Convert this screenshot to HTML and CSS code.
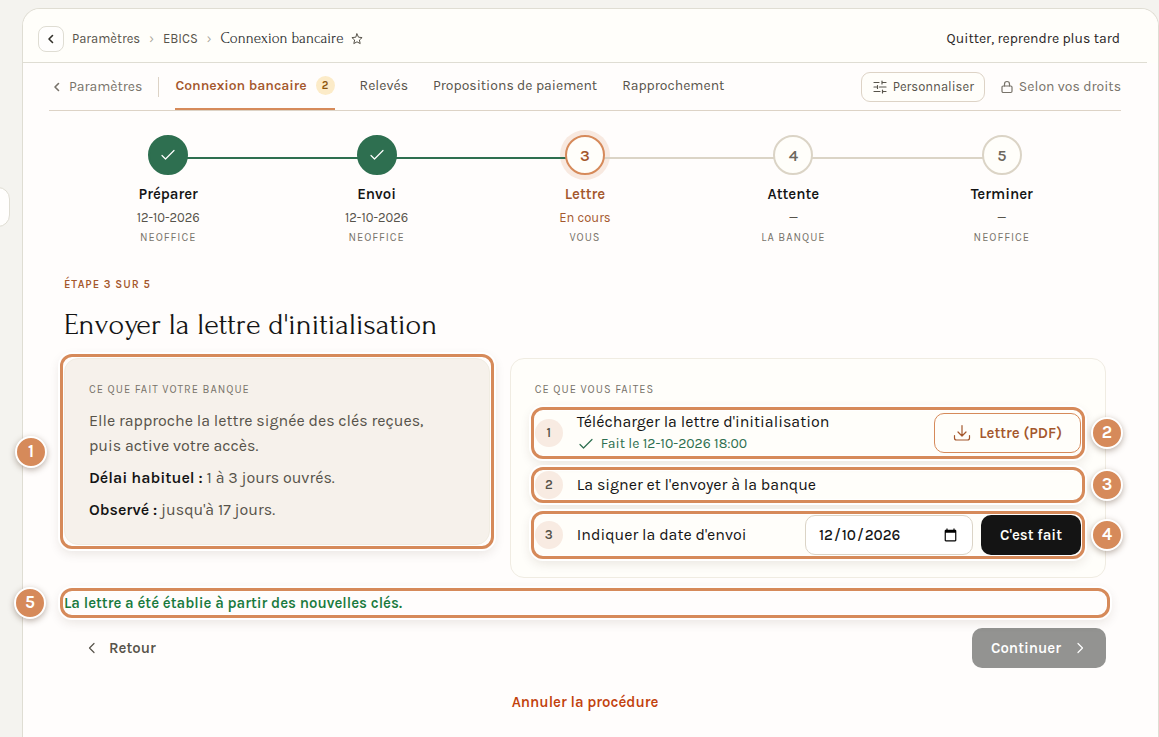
FILE: index.html
```html
<!DOCTYPE html>
<html lang="fr">
<head>
<meta charset="UTF-8">
<meta name="viewport" content="width=device-width, initial-scale=1.0">
<title>Connexion bancaire</title>
<link rel="stylesheet" href="styles.css">
</head>
<body>
<div class="side-handle"></div>
<div class="shell">
	<header class="topbar">
		<button class="back-btn" type="button" aria-label="Retour">
			<svg width="14" height="14" viewBox="0 0 14 14"><path d="M8.5 3.5L5 7l3.5 3.5"/></svg>
		</button>
		<nav class="crumbs">
			<a href="#">Paramètres</a>
			<span class="sep">›</span>
			<a href="#">EBICS</a>
			<span class="sep">›</span>
			<span class="current">Connexion bancaire</span>
		</nav>
		<button class="star" type="button" aria-label="Favori">
			<svg width="12" height="12" viewBox="0 0 12 12"><path d="M6 .9l1.500 3.300 3.600.4-2.700 2.400.8 3.600L6 8.800l-3.200 1.800.8-3.600L.9 4.600l3.600-.4z"/></svg>
		</button>
		<a class="quit" href="#">Quitter, reprendre plus tard</a>
	</header>

	<main class="content">
		<nav class="tabs">
			<a class="tab-back" href="#">
				<svg width="14" height="14" viewBox="0 0 14 14"><path d="M8.500 3.500L5 7l3.500 3.500"/></svg>
				Paramètres
			</a>
			<a class="tab active" href="#">Connexion bancaire <span class="count">2</span></a>
			<a class="tab" href="#">Relevés</a>
			<a class="tab" href="#">Propositions de paiement</a>
			<a class="tab" href="#">Rapprochement</a>
			<div class="tab-tools">
				<button class="customize" type="button">
					<svg width="14" height="14" viewBox="0 0 14 14"><path d="M1 2.500h5M9 2.500h4M9 1v3M1 7h2.500M6.500 7H13M4.500 5.500v3M1 11.500h6M10 11.500h3M9.500 10v3"/></svg>
					Personnaliser
				</button>
				<span class="rights">
					<svg width="12" height="14" viewBox="0 0 12 14"><rect x="1" y="6" width="10" height="6.500" rx="1.200"/><path d="M3.500 6V4a2.500 2.500 0 0 1 5 0v2"/></svg>
					Selon vos droits
				</span>
			</div>
		</nav>

		<div class="wizard">
			<ol class="steps">
				<li class="step done">
					<span class="dot"><svg width="16" height="16" viewBox="0 0 16 16"><path d="M2 8.500l3.500 3.500L14 3.500"/></svg></span>
					<span class="step-name">Préparer</span>
					<span class="step-date">12-10-2026</span>
					<span class="step-who">Neoffice</span>
				</li>
				<li class="step done">
					<span class="dot"><svg width="16" height="16" viewBox="0 0 16 16"><path d="M2 8.500l3.500 3.500L14 3.500"/></svg></span>
					<span class="step-name">Envoi</span>
					<span class="step-date">12-10-2026</span>
					<span class="step-who">Neoffice</span>
				</li>
				<li class="step now">
					<span class="dot">3</span>
					<span class="step-name">Lettre</span>
					<span class="step-date">En cours</span>
					<span class="step-who">Vous</span>
				</li>
				<li class="step">
					<span class="dot">4</span>
					<span class="step-name">Attente</span>
					<span class="step-date">—</span>
					<span class="step-who">La banque</span>
				</li>
				<li class="step">
					<span class="dot">5</span>
					<span class="step-name">Terminer</span>
					<span class="step-date">—</span>
					<span class="step-who">Neoffice</span>
				</li>
			</ol>

			<p class="eyebrow">Étape 3 sur 5</p>
			<h1>Envoyer la lettre d'initialisation</h1>

			<div class="panels">
				<section class="panel bank mark">
					<h2>Ce que fait votre banque</h2>
					<p>Elle rapproche la lettre signée des clés reçues, puis active votre accès.</p>
					<p><strong>Délai habituel :</strong> 1 à 3 jours ouvrés.</p>
					<p><strong>Observé :</strong> jusqu'à 17 jours.</p>
					<span class="pin pin-left">1</span>
				</section>

				<section class="panel you">
					<h2>Ce que vous faites</h2>
					<ol class="tasks">
						<li class="task tall mark">
							<span class="num">1</span>
							<div class="task-text">
								Télécharger la lettre d'initialisation
								<span class="task-done">
									<svg width="16" height="16" viewBox="0 0 16 16"><path d="M2 8.500l3.500 3.500L14 3.500"/></svg>
									Fait le 12-10-2026 18:00
								</span>
							</div>
							<button class="btn outline" type="button">
								<svg width="18" height="18" viewBox="0 0 18 18"><path d="M9 1.500v10M5 8l4 4 4-4M1.500 11.500v2.500a2 2 0 0 0 2 2h11a2 2 0 0 0 2-2v-2.500"/></svg>
								Lettre (PDF)
							</button>
							<span class="pin pin-right">2</span>
						</li>
						<li class="task mark">
							<span class="num">2</span>
							<div class="task-text">La signer et l'envoyer à la banque</div>
							<span class="pin pin-right">3</span>
						</li>
						<li class="task mark">
							<span class="num">3</span>
							<label class="task-text" for="sent">Indiquer la date d'envoi</label>
							<input class="date" id="sent" type="date" value="2026-12-10">
							<button class="btn dark" type="button">C'est fait</button>
							<span class="pin pin-right">4</span>
						</li>
					</ol>
				</section>
			</div>

			<p class="notice mark">La lettre a été établie à partir des nouvelles clés.<span class="pin pin-left">5</span></p>

			<div class="actions">
				<button class="btn plain" type="button">
					<svg width="14" height="14" viewBox="0 0 14 14"><path d="M9 2.500L4.500 7 9 11.500"/></svg>
					Retour
				</button>
				<button class="btn next" type="button" disabled>
					Continuer
					<svg width="14" height="14" viewBox="0 0 14 14"><path d="M5 2.500L9.500 7 5 11.500"/></svg>
				</button>
			</div>
			<button class="cancel" type="button">Annuler la procédure</button>
		</div>
	</main>
</div>
</body>
</html>
```

FILE: styles.css
```css
* {
	box-sizing: border-box;
}
body {
	margin: 0;
	background: #f4f3ef;
	color: #141414;
	font-family: Karla, Inter, "Liberation Sans", sans-serif;
	font-size: 16px;
	line-height: 25px;
}
a {
	color: inherit;
	text-decoration: none;
}
button, input {
	font: inherit;
	color: inherit;
}
button {
	padding: 0;
	border: 0;
	background: none;
	white-space: nowrap;
}
svg {
	flex: none;
	fill: none;
	stroke: currentColor;
	stroke-width: 1.2;
	stroke-linecap: round;
	stroke-linejoin: round;
}
h1, h2, p, ol {
	margin: 0;
	padding: 0;
}
ol {
	list-style: none;
}

.side-handle {
	position: absolute;
	top: 187px;
	left: -30px;
	width: 40px;
	height: 40px;
	border: 1px solid #dfddd3;
	border-radius: 12px;
	background: #fffefd;
}
.shell {
	margin: 8px 0 0 22px;
	min-height: calc(100vh - 8px);
	border: 1px solid #dfddd3;
	border-bottom: 0;
	border-radius: 18px 18px 0 0;
	background: #fffdfc;
}

/* top bar */
.topbar {
	display: flex;
	align-items: center;
	height: 54px;
	padding: 6px 38px 0 15px;
	border-radius: 17px 17px 0 0;
	background: linear-gradient(#dfddd3, #dfddd3) left bottom / calc(100% - 11px) 1px no-repeat #fffefa;
	font-size: 13px;
	line-height: 20px;
}
.back-btn {
	display: flex;
	align-items: center;
	justify-content: center;
	width: 26px;
	height: 26px;
	margin-right: 8px;
	border: 1px solid #dfddd3;
	border-radius: 8px;
	background: #fffefd;
	color: #34322c;
}
.back-btn svg, .tab-back svg {
	stroke-width: 1.6;
}
.crumbs {
	display: flex;
	align-items: center;
	gap: 9px;
	color: #57534a;
}
.crumbs .sep {
	color: #a8a498;
}
.crumbs .current {
	color: #2b2d2f;
	font-family: Forum, "Liberation Serif", serif;
	font-size: 15px;
}
.star {
	display: flex;
	margin-left: 8px;
	color: #57534a;
}
.star svg {
	stroke-width: 1;
}
.quit {
	margin-left: auto;
	color: #29251f;
	font-size: 14px;
}

/* tabs */
.content {
	padding: 0 37px 0 26px;
}
.tabs {
	display: flex;
	align-items: center;
	gap: 25px;
	height: 48px;
	border-bottom: 1px solid #ddd3c6;
	color: #57534a;
	font-size: 14px;
	line-height: 20px;
	white-space: nowrap;
}
.tab-back {
	display: flex;
	align-items: center;
	gap: 5px;
	margin-right: -9px;
	padding: 0 16px 0 1px;
	border-right: 1px solid #ddd3c6;
	color: #78736a;
}
.tab {
	display: flex;
	align-items: center;
	gap: 9px;
	height: 47px;
	border-bottom: 2px solid transparent;
}
.tab.active {
	border-color: #d68a5a;
	color: #a4572c;
	font-weight: 600;
}
.count {
	width: 19px;
	height: 19px;
	border-radius: 50%;
	background: #fcebc8;
	color: #8d550c;
	font-size: 11px;
	line-height: 19px;
	text-align: center;
}
.tab-tools {
	display: flex;
	align-items: center;
	gap: 16px;
	margin-left: auto;
}
.customize {
	display: flex;
	align-items: center;
	gap: 6px;
	height: 30px;
	padding: 0 10px 0 11px;
	border: 1px solid #ddd3c6;
	border-radius: 9px;
	background: #fffefa;
	font-size: 13px;
}
.rights {
	display: flex;
	align-items: center;
	gap: 6px;
	color: #78736a;
}

/* steps */
.wizard {
	padding: 24px 15px;
}
.steps {
	display: grid;
	grid-template-columns: repeat(5, 1fr);
	margin-bottom: 25px;
}
.step {
	position: relative;
	display: flex;
	flex-direction: column;
	align-items: center;
}
.step:not(:last-child):before {
	content: '';
	position: absolute;
	z-index: 1;
	top: 22px;
	left: 50%;
	width: 100%;
	height: 2px;
	background: #dbd4c6;
}
.step.done:before {
	background: #2e6f50 !important;
}
.dot {
	z-index: 2;
	display: flex;
	align-items: center;
	justify-content: center;
	width: 40px;
	height: 40px;
	margin-bottom: 9px;
	border: 2px solid #dbd4c6;
	border-radius: 50%;
	background: #fffefa;
	color: #6d685e;
	font-weight: 600;
}
.done .dot {
	border-color: #2e6f50;
	background: #2e6f50;
	color: #fff;
}
.now .dot {
	border-color: #d68a5a;
	color: #a4572c;
}
/* halo, kept under the line */
.now:after {
	content: '';
	position: absolute;
	top: -5px;
	left: calc(50% - 25px);
	width: 50px;
	height: 50px;
	border-radius: 50%;
	background: #f8e9e0;
}
.step-name {
	font-size: 15px;
	font-weight: 600;
	line-height: 20px;
}
.step-date {
	margin-top: 4px;
	color: #57534a;
	font-size: 13px;
	line-height: 20px;
}
.step-who {
	color: #78736a;
	font-size: 11px;
	letter-spacing: 1px;
	line-height: 20px;
	text-transform: uppercase;
}
.now .step-name, .now .step-date {
	color: #a4572c;
}

.eyebrow {
	color: #a4572c;
	font-size: 11px;
	font-weight: 600;
	letter-spacing: 1px;
	line-height: 24px;
	text-transform: uppercase;
}
h1 {
	margin: 10px 0 15px;
	font-family: Forum, "Liberation Serif", serif;
	font-size: 30px;
	font-weight: 400;
	line-height: 36px;
}

/* panels */
.panels {
	display: grid;
	grid-template-columns: 5fr 7fr;
	align-items: start;
	gap: 20px;
}
.panel {
	padding: 20px 24px 22px;
	border: 1px solid #f0ece2;
	border-radius: 14px;
}
.bank {
	padding-right: 32px;
	color: #57534a;
	background: #f6f1eb;
}
.bank p {
	margin-top: 7px;
}
.bank strong {
	color: #141414;
	font-weight: 600;
}
.you {
	background: #fffefa;
}
.panel h2 {
	color: #78736a;
	font-size: 11px;
	font-weight: 400;
	letter-spacing: 1px;
	line-height: 22px;
	text-transform: uppercase;
}
.tasks {
	display: grid;
	gap: 16px;
	margin-top: 10px;
}
.task {
	display: flex;
	align-items: center;
	gap: 8px;
}
.tall {
	min-height: 44px;
}
.num {
	flex: none;
	width: 28px;
	height: 28px;
	margin-right: 6px;
	border-radius: 50%;
	background: #f8ebe2;
	color: #57534a;
	font-size: 13px;
	font-weight: 600;
	line-height: 28px;
	text-align: center;
}
.task-text {
	flex: 1;
	line-height: 22px;
}
.task-done {
	display: flex;
	align-items: center;
	gap: 7px;
	padding-left: 1px;
	color: #2e6f50;
	font-size: 14px;
}
.btn {
	display: flex;
	align-items: center;
	justify-content: center;
	gap: 8px;
	height: 40px;
	padding: 0 18px;
	border: 1px solid transparent;
	border-radius: 10px;
	font-size: 15px;
	font-weight: 600;
}
.outline {
	border-color: #d68a5a;
	color: #a4572c;
}
.dark {
	background: #141414;
	color: #fffefa;
}
.date {
	width: 168px;
	height: 40px;
	padding: 0 12px;
	border: 1px solid #dbd4c6;
	border-radius: 10px;
	background: #fff;
	font-size: 15px;
	font-weight: 500;
}

/* numbered outlines */
.mark {
	position: relative;
}
.mark:after {
	content: '';
	position: absolute;
	inset: -4px;
	border: 3px solid #d68a5a;
	border-radius: 12px;
	box-shadow: 0 0 0 2px #fff, inset 0 0 0 1px #fff, 0 4px 12px rgba(60, 35, 15, .12);
	pointer-events: none;
}
.panel.mark:after {
	inset: -5px;
}
.pin {
	position: absolute;
	z-index: 2;
	top: 50%;
	width: 32px;
	height: 32px;
	margin-top: -16px;
	border: 2px solid #fff;
	border-radius: 50%;
	background: #d68a5a;
	box-shadow: 0 2px 6px rgba(60, 35, 15, .35);
	color: #fff;
	font-size: 17px;
	font-weight: 700;
	line-height: 27px;
	text-align: center;
}
.pin-left {
	left: -50px;
}
.pin-right {
	right: -42px;
}

.notice {
	margin-top: 14px;
	color: #187a3d;
	font-size: 15px;
	font-weight: 600;
	line-height: 22px;
}
.actions {
	display: flex;
	justify-content: space-between;
	margin-top: 14px;
}
.btn.plain {
	padding: 0 20px;
	gap: 10px;
	color: #57534a;
}
.btn.next {
	gap: 12px;
	background: #939391;
	color: #fff;
}
.cancel {
	display: block;
	margin: 22px auto 0;
	color: #c2410c;
	font-size: 15px;
	font-weight: 600;
}
```
